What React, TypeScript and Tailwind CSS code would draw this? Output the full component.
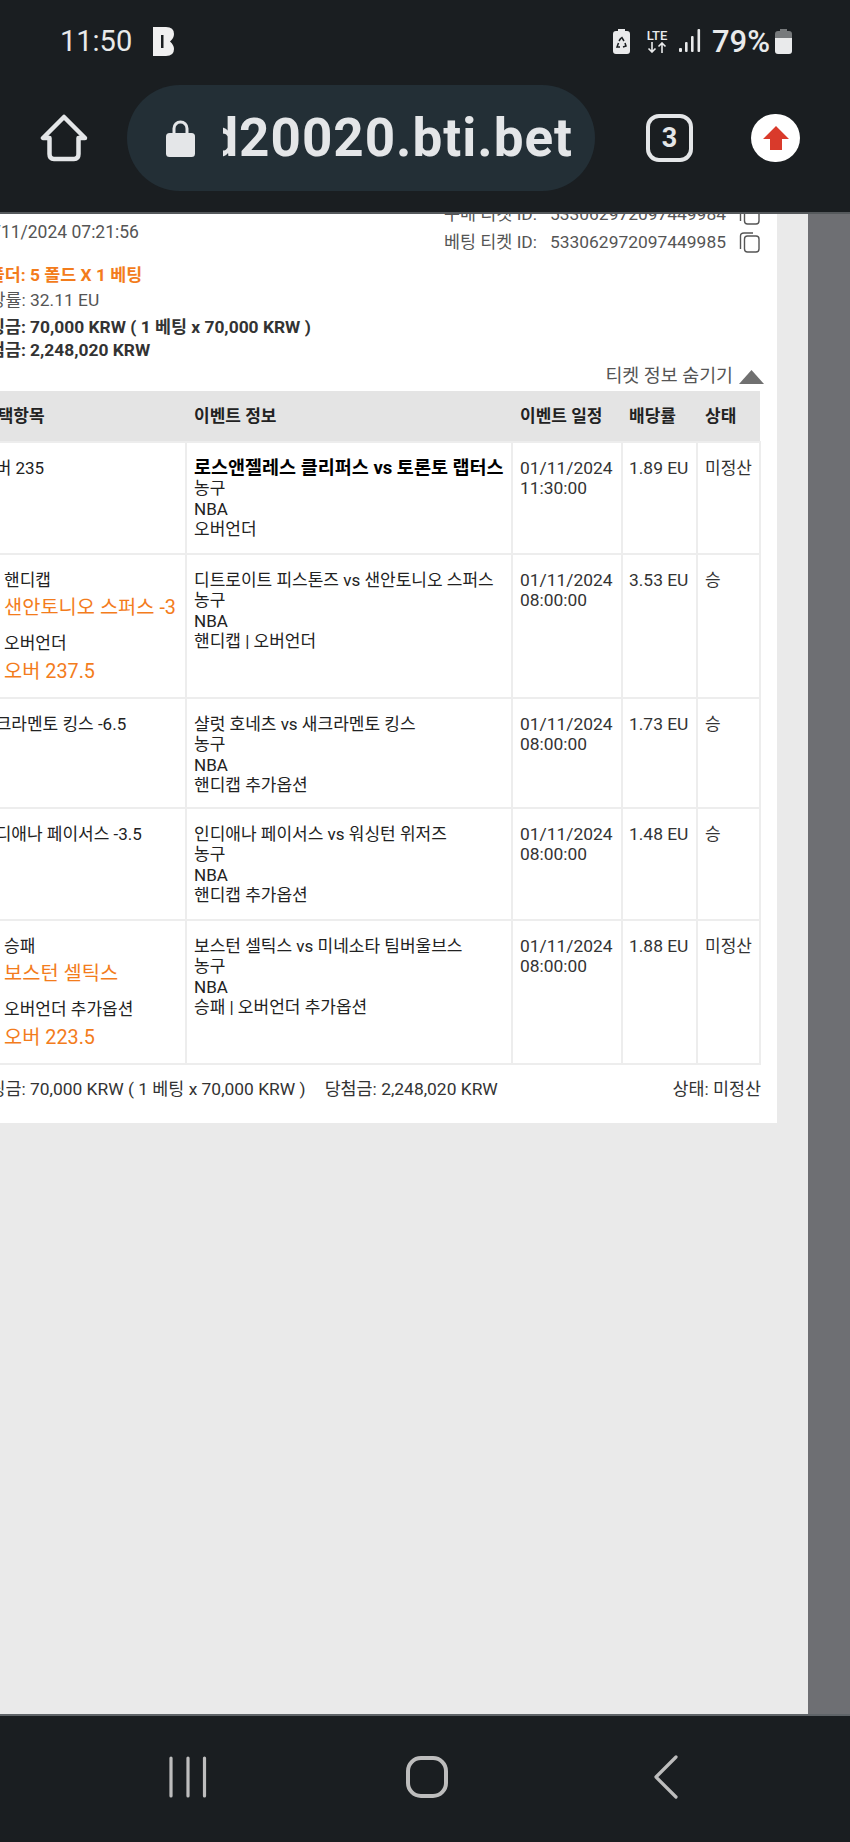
const rows = [
  {
    picks: [{ label: '오버 235' }],
    title: '로스앤젤레스 클리퍼스 vs 토론토 랩터스',
    bold: true,
    market: '오버언더',
    time: '11:30:00',
    odds: '1.89 EU',
    status: '미정산',
    height: 'h-[112px]',
  },
  {
    picks: [
      { label: '핸디캡', value: '샌안토니오 스퍼스 -3' },
      { label: '오버언더', value: '오버 237.5' },
    ],
    title: '디트로이트 피스톤즈 vs 샌안토니오 스퍼스',
    market: '핸디캡 | 오버언더',
    time: '08:00:00',
    odds: '3.53 EU',
    status: '승',
    height: 'h-[144px]',
  },
  {
    picks: [{ label: '새크라멘토 킹스 -6.5' }],
    title: '샬럿 호네츠 vs 새크라멘토 킹스',
    market: '핸디캡 추가옵션',
    time: '08:00:00',
    odds: '1.73 EU',
    status: '승',
    height: 'h-[110px]',
  },
  {
    picks: [{ label: '인디애나 페이서스 -3.5' }],
    title: '인디애나 페이서스 vs 워싱턴 위저즈',
    market: '핸디캡 추가옵션',
    time: '08:00:00',
    odds: '1.48 EU',
    status: '승',
    height: 'h-[112px]',
  },
  {
    picks: [
      { label: '승패', value: '보스턴 셀틱스' },
      { label: '오버언더 추가옵션', value: '오버 223.5' },
    ],
    title: '보스턴 셀틱스 vs 미네소타 팀버울브스',
    market: '승패 | 오버언더 추가옵션',
    time: '08:00:00',
    odds: '1.88 EU',
    status: '미정산',
    height: 'h-[143px]',
  },
];

function CopyIcon() {
  return (
    <svg width="21" height="21" viewBox="0 0 21 21" fill="none" stroke="#555" strokeWidth="1.4">
      <rect x="5.5" y="4" width="14.5" height="16" rx="3" />
      <path d="M1.5 17 V4 Q1.5 1 5 1 H14" />
    </svg>
  );
}

function StatusBar() {
  return (
    <div className="flex h-[82px] items-center pl-[60px] text-[#e9eaeb]">
      <span className="w-[92px] text-[29px] leading-none">11:50</span>
      <svg width="23" height="29" viewBox="0 0 23 29" fill="#f0f0f0">
        <path d="M1 0 H14 Q22 0 22 7 Q22 11 18 14.5 Q22 18 22 22 Q22 29 14 29 H1 Z" />
        <rect x="9" y="8" width="2.5" height="13" fill="#1a1e21" />
      </svg>
      <div className="ml-[438px] flex items-center">
        <svg width="17" height="25" viewBox="0 0 17 25">
          <path d="M5 0 H12 V2 H14 Q17 2 17 5 V22 Q17 25 14 25 H3 Q0 25 0 22 V5 Q0 2 3 2 H5 Z" fill="#e9eaeb" />
          <path d="M8.5 8 L11 12 M12 14 L13 17 L10 18 M7 18 L4 18 L5.5 14 M6 12 L8 9" stroke="#1a1e21" strokeWidth="1.5" fill="none" />
        </svg>
        <div className="ml-[14px] flex w-[26px] flex-col items-center">
          <span className="text-[13px] leading-[13px] font-medium">LTE</span>
          <svg width="20" height="11" viewBox="0 0 20 11" fill="none" stroke="#e9eaeb" strokeWidth="1.6">
            <path d="M5 0 V10 M1.5 6.5 L5 10 L8.5 6.5 M15 11 V1 M11.5 4.5 L15 1 L18.5 4.5" />
          </svg>
        </div>
        <svg className="ml-[9px]" width="22" height="24" viewBox="0 0 22 24" fill="#e9eaeb">
          <rect x="0" y="19" width="3" height="4" rx="1" />
          <rect x="6" y="13" width="2.6" height="10" rx="1" />
          <rect x="12" y="7" width="2.6" height="16" rx="1" />
          <rect x="18.5" y="0" width="2.6" height="23" rx="1" />
        </svg>
        <span className="ml-[11px] text-[31px] leading-none font-medium">79%</span>
        <svg className="ml-[5px]" width="17" height="25" viewBox="0 0 17 25">
          <path d="M5 0 H12 V2 H14 Q17 2 17 5 V9 H0 V5 Q0 2 3 2 H5 Z" fill="#777a7c" />
          <path d="M0 9 H17 V22 Q17 25 14 25 H3 Q0 25 0 22 Z" fill="#e9eaeb" />
        </svg>
      </div>
    </div>
  );
}

function UrlBar() {
  return (
    <div className="flex h-[112px] items-center pl-[40px]">
      <svg width="48" height="48" viewBox="0 0 48 48" fill="none" stroke="#e4e6e8" strokeWidth="4.5" strokeLinejoin="round" strokeLinecap="round">
        <path d="M24 3 L3 24 H9.5 V40 Q9.5 45 14 45 H34 Q38.5 45 38.5 40 V24 H45 Z" />
      </svg>
      <div className="ml-[39px] flex h-[106px] w-[468px] items-center rounded-[53px] bg-[#232f36] pl-[39px]">
        <svg width="29" height="37" viewBox="0 0 29 37" fill="#e4e6e8">
          <path d="M8 15 V8.5 A6.5 6.5 0 0 1 21 8.5 V15" fill="none" stroke="#e4e6e8" strokeWidth="3" />
          <rect x="0" y="13" width="29" height="24" rx="3.5" />
        </svg>
        <div className="ml-[28px] flex w-[350px] justify-end overflow-hidden">
          <span className="text-[53px] leading-none font-bold tracking-[1px] whitespace-nowrap text-[#e4e6e8]">d20020.bti.bet</span>
        </div>
      </div>
      <div className="ml-[51px] flex h-[48px] w-[47px] items-center justify-center rounded-[13px] border-[4px] border-[#e4e6e8] text-[27px] font-bold text-[#e4e6e8]">
        3
      </div>
      <div className="ml-[58px] flex h-[48px] w-[49px] items-center justify-center rounded-full bg-white">
        <svg width="26" height="24" viewBox="0 0 26 24" fill="#d93a2b">
          <path d="M13 0 L26 13 H19 V24 H7 V13 H0 Z" />
        </svg>
      </div>
    </div>
  );
}

function TicketHeader() {
  return (
    <>
      <div className="-mt-[14px] flex h-[62px] justify-between pr-[17px] pl-[1px]">
        <div className="-ml-[27px] pt-[22px] text-[17.5px] leading-[20px] text-[#555]">01/11/2024 07:21:56</div>
        <div className="text-[#555]">
          {['533062972097449984', '533062972097449985'].map((id, i) => (
            <div key={id} className="flex h-[28px] items-center">
              <span className="w-[106px]">{i === 0 ? '구매 티켓 ID:' : '베팅 티켓 ID:'}</span>
              <span className="w-[189px]">{id}</span>
              <CopyIcon />
            </div>
          ))}
        </div>
      </div>
      <div className="-ml-[27px]">
        <div className="flex h-[26px] items-center font-bold text-[#f37c1c]">
          <span className="w-[57px] text-right whitespace-pre">폴더: </span>
          <span>5 폴드 X 1 베팅</span>
        </div>
        <div className="flex h-[24px] items-center text-[#555]">
          <span className="w-[57px] text-right whitespace-pre">배당률: </span>
          <span>32.11 EU</span>
        </div>
        <div className="mt-[3px] flex h-[24px] items-center font-bold text-[#333]">
          <span className="w-[57px] text-right whitespace-pre">베팅금: </span>
          <span>70,000 KRW ( 1 베팅 x 70,000 KRW )</span>
        </div>
        <div className="flex h-[22px] items-center font-bold text-[#333]">
          <span className="w-[57px] text-right whitespace-pre">당첨금: </span>
          <span>2,248,020 KRW</span>
        </div>
      </div>
      <div className="mt-[1px] flex h-[29px] items-center justify-end pr-[13px] text-[18.4px] text-[#555]">
        <span>티켓 정보 숨기기</span>
        <svg className="ml-[6px]" width="25" height="14" viewBox="0 0 25 14" fill="#707070">
          <path d="M12.5 0 L25 14 H0 Z" />
        </svg>
      </div>
    </>
  );
}

function TicketTable() {
  return (
    <table className="-ml-[27px] w-[786px] table-fixed border-collapse text-[#222]">
      <colgroup>
        <col className="w-[212px]" />
        <col className="w-[326px]" />
        <col className="w-[110px]" />
        <col className="w-[75px]" />
        <col className="w-[63px]" />
      </colgroup>
      <thead>
        <tr className="h-[51px] bg-[#e4e4e4] text-left text-[17px] font-bold">
          <th className="pl-[8px] font-bold">선택항목</th>
          <th className="pl-[8px] font-bold">이벤트 정보</th>
          <th className="pl-[8px] font-bold">이벤트 일정</th>
          <th className="pl-[7px] font-bold">배당률</th>
          <th className="pl-[8px] font-bold">상태</th>
        </tr>
      </thead>
      <tbody>
        {rows.map((row) => (
          <tr key={row.title} className={`${row.height} align-top`}>
            <td className={`border-2 border-[#ededed] pt-[15px] text-[17px] ${row.picks[0].value ? 'pl-[29px]' : 'pl-[5px]'}`}>
              {row.picks.map((pick) => (
                <div key={pick.label} className="mb-[12px]">
                  <div className="whitespace-nowrap">{pick.label}</div>
                  {pick.value && (
                    <div className="mt-[4px] text-[19.8px] leading-[27px] whitespace-nowrap text-[#f37c1c]">{pick.value}</div>
                  )}
                </div>
              ))}
            </td>
            <td className="border-2 border-[#ededed] pt-[15px] pl-[7px] text-[17px]">
              <div className={`whitespace-nowrap ${row.bold ? 'text-[18.5px] font-bold text-black' : ''}`}>{row.title}</div>
              <div>농구</div>
              <div>NBA</div>
              <div>{row.market}</div>
            </td>
            <td className="border-2 border-[#ededed] pt-[15px] pl-[7px] text-[#333]">
              <div>01/11/2024</div>
              <div>{row.time}</div>
            </td>
            <td className="border-2 border-[#ededed] pt-[15px] pl-[6px] text-[#333]">{row.odds}</td>
            <td className="border-2 border-[#ededed] pt-[15px] pl-[7px] text-[17px] text-[#333]">{row.status}</td>
          </tr>
        ))}
      </tbody>
    </table>
  );
}

export default function App() {
  return (
    <div className="flex h-[1842px] w-[850px] flex-col overflow-hidden bg-[#1a1e21] font-['Roboto','Noto_Sans_CJK_KR',sans-serif] text-[17.4px] leading-[20.3px]">
      <div className="h-[214px] border-b-2 border-[#55595c]">
        <StatusBar />
        <UrlBar />
      </div>

      <div className="flex h-[1500px] overflow-hidden bg-[#eaeaea]">
        <div className="h-[909px] w-[777px] overflow-hidden bg-white">
          <TicketHeader />
          <TicketTable />
          <div className="flex justify-between pt-[14px] pr-[16px] text-[#333]">
            <div className="-ml-[27px] flex">
              <span className="w-[57px] text-right whitespace-pre">베팅금: </span>
              <span>70,000 KRW ( 1 베팅 x 70,000 KRW )</span>
              <span className="ml-[19px]">당첨금: 2,248,020 KRW</span>
            </div>
            <span>상태: 미정산</span>
          </div>
        </div>
        <div className="w-[31px]" />
        <div className="w-[42px] bg-[#6e6f73]" />
      </div>

      <div className="flex h-[128px] items-center border-t-2 border-[#5f6468] pb-[4px] pl-[168px]">
        <svg width="40" height="42" viewBox="0 0 40 42" stroke="#bdbdbd" strokeWidth="3.2" strokeLinecap="round">
          <path d="M3 2 V40 M20 2 V40 M36.5 2 V40" />
        </svg>
        <svg className="ml-[197px]" width="44" height="44" viewBox="0 0 44 44" fill="none" stroke="#bdbdbd" strokeWidth="4">
          <rect x="3" y="3" width="38" height="38" rx="13" />
        </svg>
        <svg className="ml-[203px]" width="28" height="44" viewBox="0 0 28 44" fill="none" stroke="#bdbdbd" strokeWidth="3.2" strokeLinecap="round" strokeLinejoin="round">
          <path d="M24 2 L4 22 L24 42" />
        </svg>
      </div>
    </div>
  );
}
